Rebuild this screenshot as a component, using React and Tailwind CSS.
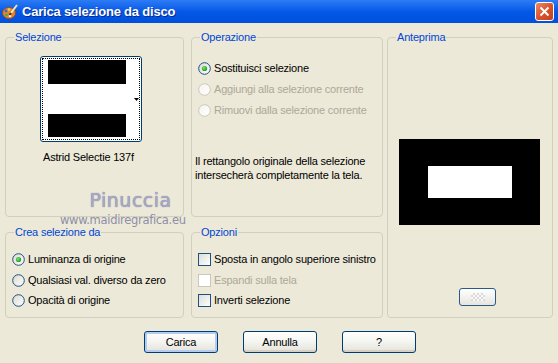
import React from "react";

function Radio({ checked, disabled }) {
  return (
    <svg width="13" height="13" viewBox="0 0 13 13" className="shrink-0">
      <defs>
        <linearGradient id={disabled ? "rgd" : "rg"} x1="0" y1="0" x2="1" y2="1">
          <stop offset="0" stopColor={disabled ? "#F4F3EE" : "#DCD9CF"} />
          <stop offset="1" stopColor="#FFFFFF" />
        </linearGradient>
        <radialGradient id="rdot" cx="0.4" cy="0.4" r="0.6">
          <stop offset="0" stopColor="#7FE37F" />
          <stop offset="1" stopColor="#1E9A1E" />
        </radialGradient>
      </defs>
      <circle cx="6.5" cy="6.5" r="5.8" fill={`url(#${disabled ? "rgd" : "rg"})`} stroke={disabled ? "#CAC8BB" : "#1C5180"} strokeWidth="1" />
      {checked && <circle cx="6.5" cy="6.5" r="2.6" fill="url(#rdot)" />}
    </svg>
  );
}

function Check({ disabled }) {
  return (
    <div
      className={
        "w-[13px] h-[13px] shrink-0 border " +
        (disabled
          ? "border-[#CAC8BB] bg-white"
          : "border-[#1C5180] bg-gradient-to-br from-[#DCDCD7] to-white")
      }
    />
  );
}

function Group({ title, className, children }) {
  return (
    <fieldset className={"border border-[#D0D0BF] rounded-[4px] min-w-0 " + className}>
      <legend className="ml-[8px] px-[1px] leading-[12px] text-[#0046D5]">{title}</legend>
      {children}
    </fieldset>
  );
}

function Btn({ children, def }) {
  return (
    <div
      className={
        "w-[74px] h-[22px] border border-[#003C74] rounded-[3px] bg-gradient-to-b from-white via-[#F4F4F0] to-[#E3E2DA] flex items-center justify-center " +
        (def ? "shadow-[inset_0_0_0_2px_#B4CCF0]" : "shadow-[inset_0_-2px_0_#D6D0C5]")
      }
    >
      {children}
    </div>
  );
}

export default function App() {
  return (
    <div className="w-[558px] h-[363px] bg-[#ECE9D8] font-['Liberation_Sans',Arial,sans-serif] text-[11px] tracking-[-0.2px] whitespace-nowrap text-black flex flex-col overflow-hidden">
      {/* title bar */}
      <div className="h-[23px] shrink-0 bg-gradient-to-b from-[#2C7CF6] via-[#0557E6] to-[#0050DE] flex items-center relative">
        <svg width="16" height="16" viewBox="0 0 16 16" className="ml-[2px]">
          <ellipse cx="7" cy="9" rx="6.5" ry="5.5" fill="#E7852E" stroke="#9A4A14" strokeWidth="0.8" />
          <circle cx="4" cy="7" r="1.4" fill="#2E6BE6" />
          <circle cx="7" cy="5.5" r="1.3" fill="#F4D23A" />
          <circle cx="4.5" cy="11" r="1.3" fill="#3CB043" />
          <circle cx="8" cy="12" r="1.2" fill="#FFFFFF" />
          <path d="M15 1 L9 9" stroke="#F5E6B0" strokeWidth="2" />
          <path d="M9 9 L7.5 11" stroke="#333" strokeWidth="2" />
        </svg>
        <span className="ml-[4px] text-white font-bold text-[13px] tracking-[-0.2px] [text-shadow:1px_1px_0_#0A2A8A]">
          Carica selezione da disco
        </span>
        <div className="absolute right-[4px] top-[2px] w-[19px] h-[19px] rounded-[3px] border border-white bg-gradient-to-br from-[#E98A66] via-[#DA532C] to-[#C2401A] flex items-center justify-center">
          <svg width="11" height="11" viewBox="0 0 11 11">
            <path d="M1.5 1.5 L9.5 9.5 M9.5 1.5 L1.5 9.5" stroke="white" strokeWidth="2" />
          </svg>
        </div>
      </div>

      {/* body */}
      <div className="flex pl-[5px] pt-[8px]">
        {/* left column */}
        <div className="w-[179px] flex flex-col gap-[9px] relative">
          <Group title="Selezione" className="h-[186px]">
            <div className="mt-[13px] ml-[34px] w-[102px] h-[86px] border border-[#003C74] rounded-[3px] bg-white p-[1px]">
              <div className="h-full border border-dotted border-black flex">
                <div className="w-[5px]" />
                <div className="w-[78px] pt-[1px] flex flex-col">
                  <div className="h-[24px] bg-black" />
                  <div className="h-[30px] bg-white" />
                  <div className="h-[23px] bg-black" />
                </div>
                <div className="flex-1 flex items-center justify-end">
                  <svg width="5" height="3" viewBox="0 0 5 3">
                    <path d="M0 0 H5 L2.5 3 Z" fill="black" />
                  </svg>
                </div>
              </div>
            </div>
            <div className="mt-[8px] leading-[14px] ml-[37px]">Astrid Selectie 137f</div>
          </Group>
          <Group title="Crea selezione da" className="h-[92px]">
            <div className="mt-[11px] pl-[6px] flex flex-col">
              <div className="h-[21px] flex items-center gap-[3px]"><Radio checked /><span>Luminanza di origine</span></div>
              <div className="h-[20px] flex items-center gap-[3px]"><Radio /><span>Qualsiasi val. diverso da zero</span></div>
              <div className="h-[20px] flex items-center gap-[3px]"><Radio /><span>Opacità di origine</span></div>
            </div>
          </Group>
          {/* watermark */}
          <div className="absolute left-[55px] top-[160px] flex flex-col items-end pointer-events-none">
            <span className="text-[19px] leading-[19px] font-['DejaVu_Sans',sans-serif] text-[#A8A8C8] tracking-[0.5px] mr-[14px] [text-shadow:0_0_1px_#6E6E8A]">
              Pinuccia
            </span>
            <span className="mt-[5px] text-[11.5px] leading-[11px] font-['DejaVu_Sans',sans-serif] text-[#8E8EA8] tracking-[-0.3px]">
              www.maidiregrafica.eu
            </span>
          </div>
        </div>

        {/* middle column */}
        <div className="ml-[7px] w-[192px] flex flex-col gap-[9px]">
          <Group title="Operazione" className="h-[186px]">
            <div className="mt-[15px] pl-[6px] flex flex-col">
              <div className="h-[21px] flex items-center gap-[3px]"><Radio checked /><span>Sostituisci selezione</span></div>
              <div className="h-[21px] flex items-center gap-[3px] text-[#ACA899]"><Radio disabled /><span>Aggiungi alla selezione corrente</span></div>
              <div className="h-[21px] flex items-center gap-[3px] text-[#ACA899]"><Radio disabled /><span>Rimuovi dalla selezione corrente</span></div>
            </div>
            <p className="mt-[33px] pl-[3px] leading-[14px]">
              Il rettangolo originale della selezione
              <br />
              intersecherà completamente la tela.
            </p>
          </Group>
          <Group title="Opzioni" className="h-[92px]">
            <div className="mt-[11px] pl-[6px] flex flex-col">
              <div className="h-[21px] flex items-center gap-[3px]"><Check /><span>Sposta in angolo superiore sinistro</span></div>
              <div className="h-[20px] flex items-center gap-[3px] text-[#ACA899]"><Check disabled /><span>Espandi sulla tela</span></div>
              <div className="h-[20px] flex items-center gap-[3px]"><Check /><span>Inverti selezione</span></div>
            </div>
          </Group>
        </div>

        {/* right column */}
        <Group title="Anteprima" className="ml-[4px] w-[166px] h-[287px]">
          <div className="mt-[96px] ml-[11px] w-[141px] h-[86px] bg-black pt-[27px] pl-[29px]">
            <div className="w-[84px] h-[32px] bg-white" />
          </div>
          <div className="mt-[63px] ml-[71px] w-[37px] h-[18px] border border-[#2A5A8A] rounded-[3px] bg-gradient-to-b from-white to-[#E6E5DE] flex items-center justify-center">
            <div className="w-[14px] h-[8px] bg-[repeating-conic-gradient(#DADADA_0_25%,#F8F8F8_0_50%)] bg-[length:4px_4px]" />
          </div>
        </Group>
      </div>

      {/* buttons */}
      <div className="mt-[13px] flex pl-[144px] gap-[25px]">
        <Btn def>Carica</Btn>
        <Btn>Annulla</Btn>
        <Btn>?</Btn>
      </div>
    </div>
  );
}
